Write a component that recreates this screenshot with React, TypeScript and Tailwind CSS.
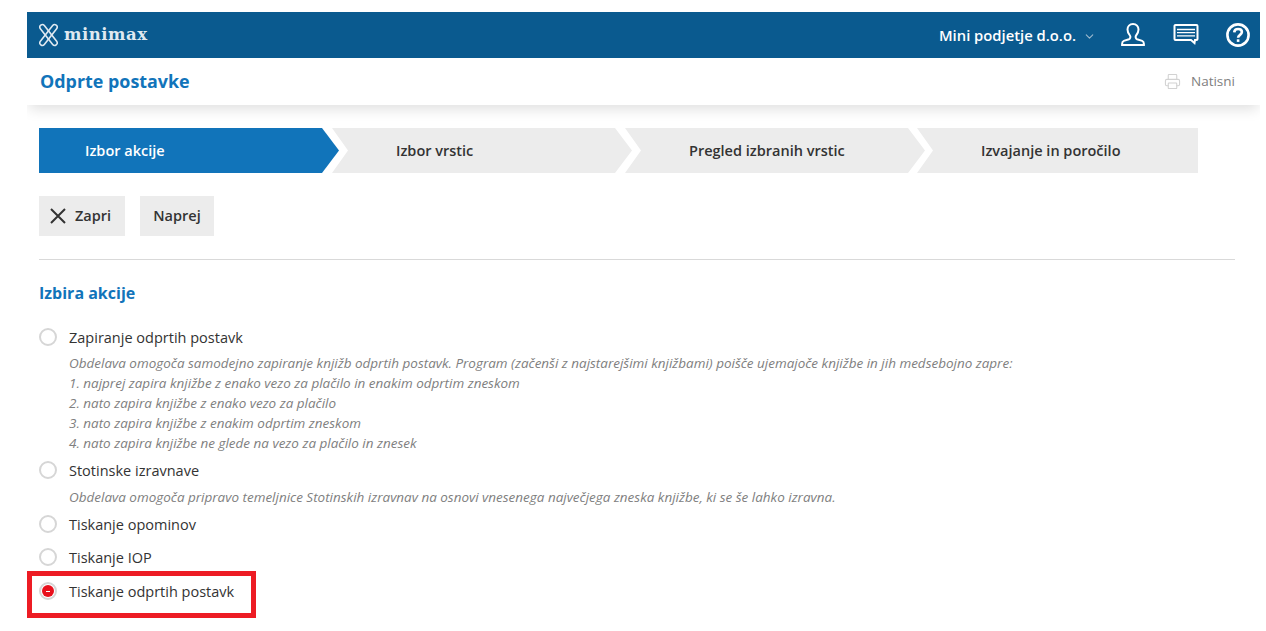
import { ChevronDown, Printer } from 'lucide-react';

const steps = [
  { label: 'Izbor vrstic', shape: 'w-[300px] -ml-[7px] pl-[64px] [clip-path:polygon(0_0,283px_0,300px_50%,283px_100%,0_100%,16px_50%)]' },
  { label: 'Pregled izbranih vrstic', shape: 'w-[300px] -ml-[7px] pl-[64px] [clip-path:polygon(0_0,283px_0,300px_50%,283px_100%,0_100%,16px_50%)]' },
  { label: 'Izvajanje in poročilo', shape: 'w-[281px] -ml-[8px] pl-[64px] [clip-path:polygon(0_0,100%_0,100%_100%,0_100%,16px_50%)]' },
];

const hints = [
  'Obdelava omogoča samodejno zapiranje knjižb odprtih postavk. Program (začenši z najstarejšimi knjižbami) poišče ujemajoče knjižbe in jih medsebojno zapre:',
  '1. najprej zapira knjižbe z enako vezo za plačilo in enakim odprtim zneskom',
  '2. nato zapira knjižbe z enako vezo za plačilo',
  '3. nato zapira knjižbe z enakim odprtim zneskom',
  '4. nato zapira knjižbe ne glede na vezo za plačilo in znesek',
];

function Logo() {
  return (
    <svg width="19" height="24" viewBox="0 0 19 24" fill="none" stroke="#dfe9f1" strokeWidth="1.6">
      <rect x="-3" y="9.500" width="25" height="5" rx="2.500" transform="rotate(52 9.500 12)" />
      <rect x="-3" y="9.500" width="25" height="5" rx="2.500" transform="rotate(-52 9.500 12)" />
    </svg>
  );
}

function UserIcon() {
  return (
    <svg width="24" height="24" viewBox="0 0 24 24" fill="none" stroke="white" strokeWidth="2">
      <path d="M12 1c-3.400 0-5.500 2.400-5.500 5.500 0 2.600 1.200 4.500 2.400 6 .9 1.100.5 3.200-.9 3.700l-5.200 1.700c-1.100.4-1.700 1.300-1.700 3.100v1h21.800v-1c0-1.800-.6-2.700-1.700-3.100l-5.200-1.700c-1.400-.5-1.800-2.600-.9-3.700 1.200-1.500 2.400-3.400 2.400-6C17.500 3.400 15.400 1 12 1z" />
    </svg>
  );
}

function MessageIcon() {
  return (
    <svg width="26" height="22" viewBox="0 0 26 22" fill="none" stroke="white">
      <path strokeWidth="2" d="M2.500 1h21a1 1 0 0 1 1 1v13a1 1 0 0 1-1 1h-1.500l-.5 3-3.500-3H2.500a1 1 0 0 1-1-1V2a1 1 0 0 1 1-1z" />
      <path strokeWidth="1.300" d="M4 5.500h18M4 8.700h18M4 11.900h18" />
    </svg>
  );
}

function HelpIcon() {
  return (
    <svg width="24" height="24" viewBox="0 0 24 24" fill="none" stroke="white" strokeWidth="2.600">
      <circle cx="12" cy="12" r="10.600" />
      <path d="M8.200 9.300c.2-2.100 1.800-3.300 3.900-3.300 2.200 0 3.800 1.300 3.800 3.100 0 2.800-3.800 2.800-3.800 5.700" />
      <path d="M12.100 16.300v2.600" />
    </svg>
  );
}

function CloseIcon() {
  return (
    <svg width="16" height="16" viewBox="0 0 16 16" fill="none" stroke="#333333" strokeWidth="2">
      <path d="M1 1l14 14M15 1L1 15" />
    </svg>
  );
}

function Radio({ checked }: { checked?: boolean }) {
  return (
    <span className="flex h-[18px] w-[18px] shrink-0 items-center justify-center rounded-full border-2 border-[#d6d6d6] bg-white">
      {checked && (
        <span className="flex h-[12px] w-[12px] items-center justify-center rounded-full bg-[#e8101c]">
          <span className="h-[1px] w-[4px] bg-white" />
        </span>
      )}
    </span>
  );
}

function Option({ label, checked, className }: { label: string; checked?: boolean; className?: string }) {
  return (
    <div className={`flex h-[20px] items-center gap-3 text-[14.500px] text-[#333333] ${className ?? ''}`}>
      <Radio checked={checked} />
      <span className="pt-[2px]">{label}</span>
    </div>
  );
}

export default function App() {
  return (
    <div className="h-[631px] overflow-hidden bg-white pt-3 pl-[27px] pr-[6px] font-['Open_Sans',sans-serif]">
      <header className="flex h-[46px] items-center bg-[#0a5a8f] pl-[12px] pr-[10px] text-white">
        <Logo />
        <span className="ml-[6px] font-['DejaVu_Serif',serif] text-[16.500px] font-bold tracking-[0.5px] text-[#dfe9f1]">minimax</span>
        <span className="ml-auto text-[14.800px] font-semibold">Mini podjetje d.o.o.</span>
        <ChevronDown className="mt-[2px] ml-[7px] h-[13px] w-[13px] text-[#9db9cf]" />
        <span className="ml-[25px]"><UserIcon /></span>
        <span className="ml-[28px]"><MessageIcon /></span>
        <span className="ml-[27px]"><HelpIcon /></span>
      </header>

      <div className="flex h-[47px] items-center justify-between pl-[13px] pr-[25px] [clip-path:inset(0_0_-20px_0)] shadow-[0_6px_14px_-2px_rgba(0,0,0,0.13)]">
        <h1 className="text-[17.900px] font-bold text-[#1174ba]">Odprte postavke</h1>
        <div className="flex items-center gap-[10px] text-[13.500px] text-[#808080]">
          <Printer className="h-[17px] w-[17px] text-[#d2d2d2]" strokeWidth={1.5} />
          <span className="-mt-[1px]">Natisni</span>
        </div>
      </div>

      <div className="pl-3 pr-[25px]">
        <div className="mt-[23px] flex h-[45px] text-[14.500px] font-semibold text-[#333333]">
          <div className="flex w-[300px] items-center bg-[#1174ba] pl-[46px] text-white [clip-path:polygon(0_0,283px_0,300px_50%,283px_100%,0_100%)]">
            Izbor akcije
          </div>
          {steps.map((step) => (
            <div key={step.label} className={`flex items-center bg-[#ececec] ${step.shape}`}>
              {step.label}
            </div>
          ))}
        </div>

        <div className="mt-[23px] flex gap-[15px] text-[14.500px] font-semibold text-[#333333]">
          <button className="flex h-[40px] w-[86px] items-center gap-[9px] bg-[#ececec] pl-[11px]">
            <CloseIcon />
            Zapri
          </button>
          <button className="h-[40px] w-[74px] bg-[#ececec]">Naprej</button>
        </div>

        <div className="mt-[23px] border-t border-[#d9d9d9]" />

        <h2 className="mt-[22px] text-[16px] leading-[22px] font-bold text-[#1174ba]">Izbira akcije</h2>

        <Option label="Zapiranje odprtih postavk" className="mt-[23px]" />
        <div className="mt-[6px] pl-[30px] text-[13.480px] leading-[20px] text-[#808080] italic">
          {hints.map((hint) => (
            <p key={hint}>{hint}</p>
          ))}
        </div>
        <Option label="Stotinske izravnave" className="mt-[7px]" />
        <p className="mt-[7px] pl-[30px] text-[13.480px] leading-[20px] text-[#808080] italic">
          Obdelava omogoča pripravo temeljnice Stotinskih izravnav na osnovi vnesenega največjega zneska knjižbe, ki se še lahko izravna.
        </p>
        <Option label="Tiskanje opominov" className="mt-[7px]" />
        <Option label="Tiskanje IOP" className="mt-[13px]" />
        <Option label="Tiskanje odprtih postavk" checked className="mt-[14px]" />
      </div>

      <div className="absolute top-[571px] left-[27px] h-[47px] w-[229px] border-[5px] border-[#ed1c24]" />
    </div>
  );
}
